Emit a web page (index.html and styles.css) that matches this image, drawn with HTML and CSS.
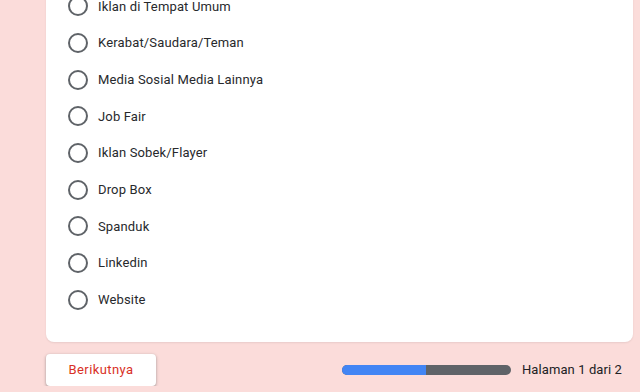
FILE: index.html
```html
<!DOCTYPE html>
<html lang="id">
<head>
    <meta charset="UTF-8">
    <meta name="viewport" content="width=device-width, initial-scale=1.0">
    <title>Formulir</title>
    <link rel="stylesheet" href="styles.css">
</head>
<body>
    <div class="page">
        <div class="card">
            <div class="options">
                <label class="option"><span class="radio"></span><span class="option-text">Iklan di Tempat Umum</span></label>
                <label class="option"><span class="radio"></span><span class="option-text">Kerabat/Saudara/Teman</span></label>
                <label class="option"><span class="radio"></span><span class="option-text">Media Sosial Media Lainnya</span></label>
                <label class="option"><span class="radio"></span><span class="option-text">Job Fair</span></label>
                <label class="option"><span class="radio"></span><span class="option-text">Iklan Sobek/Flayer</span></label>
                <label class="option"><span class="radio"></span><span class="option-text">Drop Box</span></label>
                <label class="option"><span class="radio"></span><span class="option-text">Spanduk</span></label>
                <label class="option"><span class="radio"></span><span class="option-text">Linkedin</span></label>
                <label class="option"><span class="radio"></span><span class="option-text">Website</span></label>
            </div>
        </div>

        <div class="footer">
            <button class="next-btn">Berikutnya</button>
            <div class="progress">
                <div class="progress-bar">
                    <div class="progress-fill" style="width: 50%"></div>
                </div>
                <span class="progress-text">Halaman 1 dari 2</span>
            </div>
        </div>
    </div>
</body>
</html>
```

FILE: styles.css
```css
* {
    margin: 0;
    padding: 0;
    box-sizing: border-box;
}

body {
    font-family: Roboto, 'Liberation Sans', Arial, sans-serif;
    background: #fbdcda;
    color: #202124;
    overflow: hidden;
}

.page {
    width: 587px;
    margin-left: 46px;
    margin-top: -12px;
}

.card {
    background: #fff;
    border-radius: 0 0 8px 8px;
    box-shadow: 0 1px 2px rgba(0, 0, 0, 0.08);
    padding: 0 22px 24px;
}

.option {
    display: flex;
    align-items: center;
    gap: 10px;
    height: 36.67px;
    font-size: 13px;
    letter-spacing: 0.15px;
    color: #27292c;
    cursor: pointer;
}

.radio {
    width: 20px;
    height: 20px;
    border: 2px solid #5f6368;
    border-radius: 50%;
    flex-shrink: 0;
}

.footer {
    display: flex;
    align-items: center;
    justify-content: space-between;
    margin-top: 12px;
    padding-right: 11px;
}

.next-btn {
    width: 110px;
    height: 32px;
    background: #fff;
    border: none;
    border-radius: 4px;
    box-shadow: 0 1px 2px rgba(60, 64, 67, 0.3), 0 1px 3px 1px rgba(60, 64, 67, 0.15);
    color: #d93025;
    font-family: Roboto, 'Liberation Sans', Arial, sans-serif;
    font-size: 13px;
    font-weight: 400;
    letter-spacing: 0.4px;
    cursor: pointer;
}

.progress {
    display: flex;
    align-items: center;
    gap: 11px;
}

.progress-bar {
    width: 169px;
    height: 10px;
    background: #5f6368;
    border-radius: 5px;
    overflow: hidden;
}

.progress-fill {
    height: 100%;
    background: #4285f4;
}

.progress-text {
    font-size: 13px;
    color: #202124;
    letter-spacing: 0.1px;
}
```
